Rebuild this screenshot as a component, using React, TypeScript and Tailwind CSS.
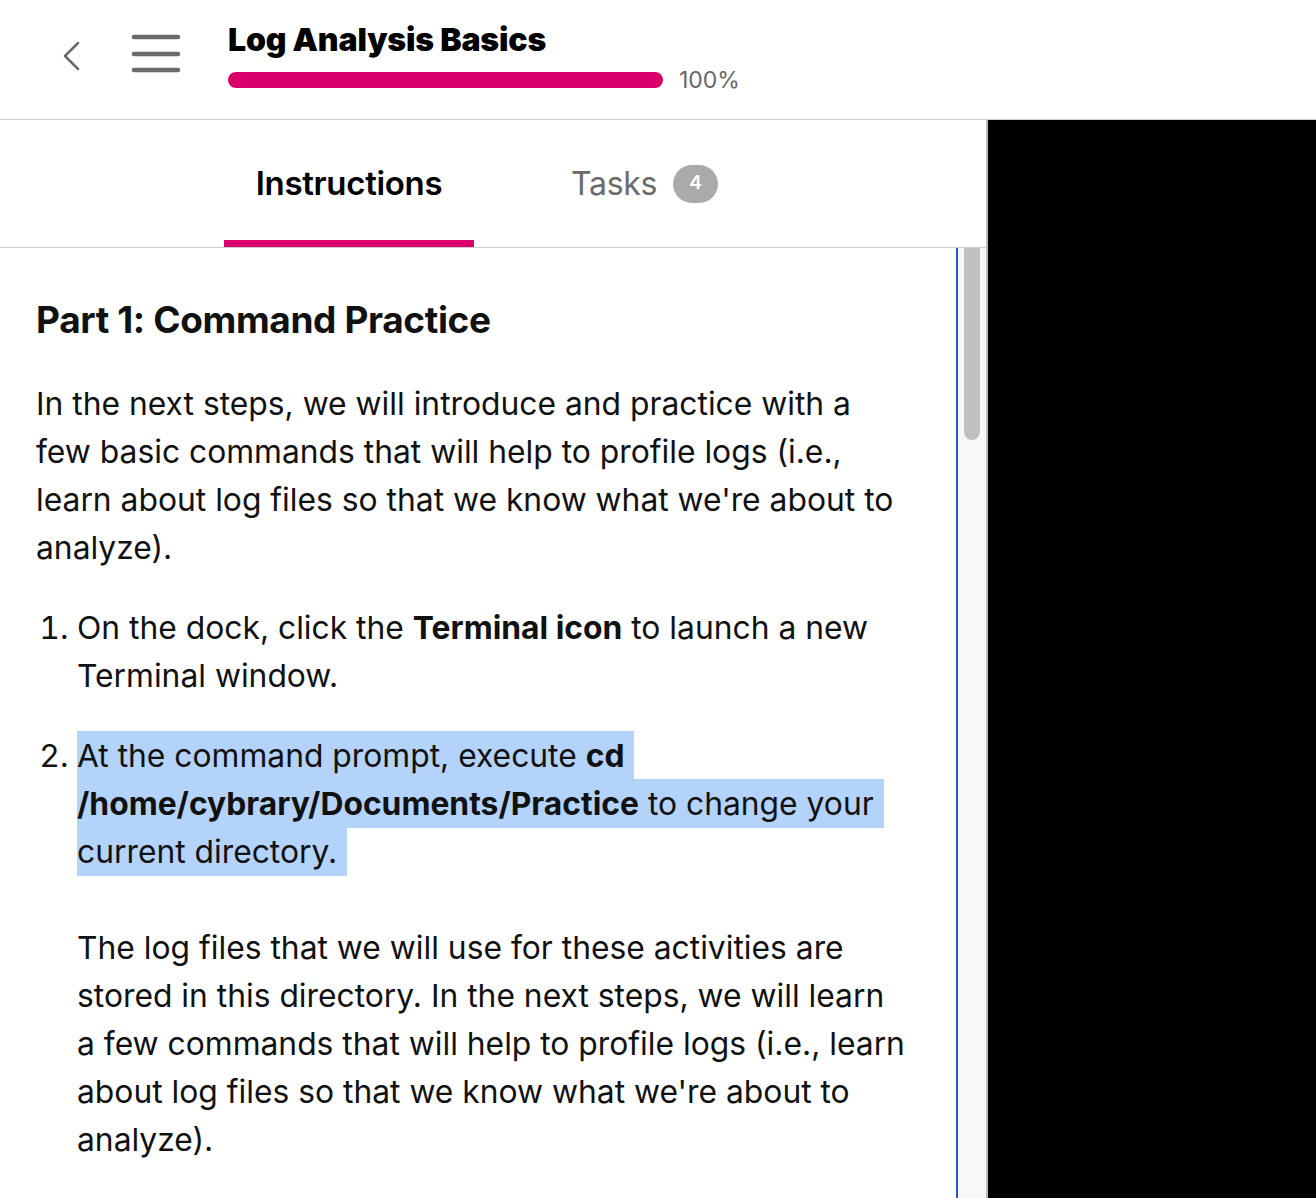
import React from "react"

function ChevronLeft() {
    return (
        <svg width="20" height="30" viewBox="0 0 20 30" fill="none">
            <path d="M17 2 L4 15 L17 28" stroke="#6b6b6b" strokeWidth="2.5" strokeLinecap="round" strokeLinejoin="round" />
        </svg>
    )
}

function Hamburger() {
    return (
        <svg width="50" height="40" viewBox="0 0 50 40" fill="none">
            <path d="M3 3 H47 M3 20 H47 M3 36 H47" stroke="#6b6b6b" strokeWidth="4.5" strokeLinecap="round" />
        </svg>
    )
}

export default function App() {
    return (
        <div className="h-[1198px] w-[1316px] overflow-hidden bg-white text-black font-['Inter',sans-serif] flex flex-col">
            {/* Header */}
            <header className="h-[120px] shrink-0 border-b border-[#cccccc] flex items-start">
                <div className="pl-[61px] pt-[41px]">
                    <ChevronLeft />
                </div>
                <div className="pl-[50px] pt-[34px]">
                    <Hamburger />
                </div>
                <div className="pl-[47px] pt-[20px] flex flex-col">
                    <h1 className="text-[32px] leading-[40px] font-black tracking-[-0.005em] text-black">
                        Log Analysis Basics
                    </h1>
                    <div className="flex items-center gap-[16px] mt-[6px]">
                        <div className="w-[435px] h-[16px] rounded-full bg-[#d9006c]" />
                        <span className="text-[23px] leading-[28px] text-[#666666]">100%</span>
                    </div>
                </div>
            </header>

            <div className="flex flex-1 min-h-0">
                {/* Left panel */}
                <div className="w-[988px] shrink-0 flex flex-col border-r-2 border-[#bdbdbd]">
                    {/* Tabs */}
                    <div className="h-[128px] shrink-0 border-b border-[#cccccc] flex items-end pl-[224px]">
                        <div className="w-[250px] h-full flex flex-col items-center">
                            <div className="flex-1 flex items-center pt-[8px]">
                                <span className="text-[33px] font-semibold tracking-[-0.01em] text-black">Instructions</span>
                            </div>
                            <div className="h-[7px] w-full bg-[#d9006c]" />
                        </div>
                        <div className="h-full flex items-center gap-[16px] pl-[97px]">
                            <span className="text-[32px] tracking-[-0.01em] text-[#6b6b6b]">Tasks</span>
                            <span className="w-[45px] h-[38px] rounded-full bg-[#aaaaaa] text-white text-[19px] font-semibold flex items-center justify-center">4</span>
                        </div>
                    </div>

                    {/* Content */}
                    <div className="flex flex-1 min-h-0">
                        <div className="flex-1 overflow-hidden pl-[36px] pr-[47px] pt-[52px] border-r-2 border-[#2457d6] text-[31.8px] leading-[48px] text-[#111111]">
                            <h2 className="text-[37px] leading-[40px] font-bold tracking-[-0.01em] mb-[40px]">
                                Part 1: Command Practice
                            </h2>
                            <p className="mb-[32px]">
                                In the next steps, we will introduce and practice with a few basic commands that will help to profile logs (i.e., learn about log files so that we know what we're about to analyze).
                            </p>
                            <ol className="list-decimal pl-[41px] flex flex-col gap-[32px]">
                                <li>
                                    On the dock, click the <strong className="font-bold">Terminal icon</strong> to launch a new Terminal window.
                                </li>
                                <li>
                                    <span className="bg-[#b3d3fb] py-[5px] pr-[10px] box-decoration-clone">
                                        At the command prompt, execute <strong className="font-bold">cd /home/cybrary/Documents/Practice</strong> to change your current directory.
                                    </span>
                                    <br />
                                    <br />
                                    The log files that we will use for these activities are stored in this directory. In the next steps, we will learn a few commands that will help to profile logs (i.e., learn about log files so that we know what we're about to analyze).
                                </li>
                            </ol>
                        </div>
                        {/* Scrollbar */}
                        <div className="w-[28px] shrink-0 bg-[#f8f8f8] flex justify-center">
                            <div className="w-[16px] h-[192px] rounded-b-full bg-[#c1c1c1]" />
                        </div>
                    </div>
                </div>
                {/* Right black area */}
                <div className="flex-1 bg-black" />
            </div>
        </div>
    )
}
